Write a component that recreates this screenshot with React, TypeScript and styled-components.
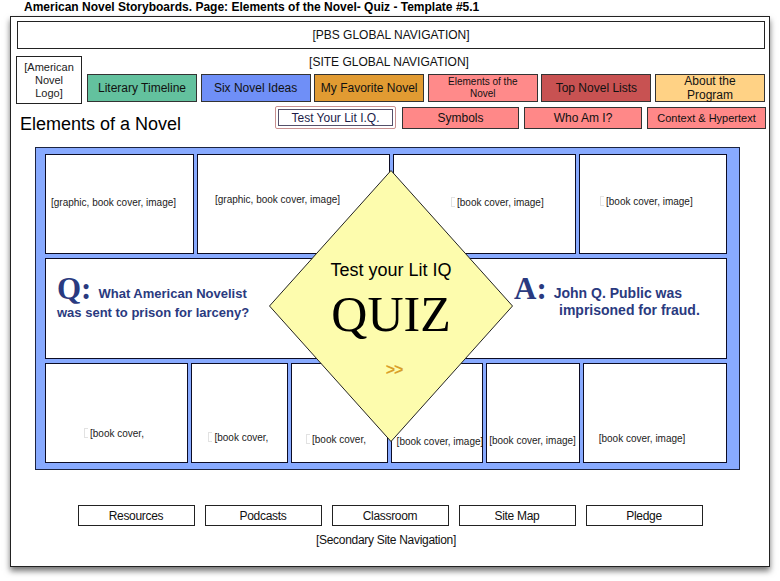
import React from 'react'
import styled, { createGlobalStyle } from 'styled-components'

const GlobalStyle = createGlobalStyle`
    html, body {
        margin: 0;
        padding: 0;
        background: #ffffff;
    }
    body {
        font-family: 'Liberation Sans', Arial, sans-serif;
        color: #111;
    }
    * {
        box-sizing: border-box;
    }
`

const Page = styled.div`
    width: 780px;
    height: 581px;
    overflow: hidden;
`

const DocTitle = styled.div`
    height: 16px;
    padding-left: 24px;
    font-size: 12px;
    font-weight: 700;
    line-height: 14px;
    color: #000;
`

const Frame = styled.div`
    margin-left: 10px;
    width: 760px;
    height: 551px;
    border: 1px solid #222;
    background: #fff;
    box-shadow: 0 4px 6px rgba(0, 0, 0, 0.55);
    display: flex;
    flex-direction: column;
`

const GlobalBar = styled.div`
    margin: 4px 4px 0 6px;
    height: 28px;
    border: 1px solid #222;
    display: flex;
    align-items: center;
    justify-content: center;
    font-size: 12px;
`

const Header = styled.div`
    margin: 7px 4px 0 5px;
    display: grid;
    grid-template-columns: 66px 1fr;
    grid-template-rows: 18px 28px;
    column-gap: 5px;
`

const SiteLabel = styled.div`
    grid-column: 1 / -1;
    grid-row: 1;
    text-align: center;
    font-size: 12px;
    line-height: 12px;
    padding-right: 3px;
`

const Logo = styled.div`
    grid-column: 1;
    grid-row: 1 / 3;
    height: 48px;
    border: 1px solid #222;
    display: flex;
    align-items: center;
    justify-content: center;
    text-align: center;
    font-size: 11px;
    line-height: 13px;
    color: #222;
`

const NavRow = styled.div`
    grid-column: 2;
    grid-row: 2;
    display: flex;
    justify-content: space-between;
`

const NavButton = styled.div<{ $bg: string; $size?: number }>`
    width: 110px;
    height: 28px;
    background: ${(p) => p.$bg};
    border: 1px solid #333;
    display: flex;
    align-items: center;
    justify-content: center;
    text-align: center;
    font-size: ${(p) => p.$size ?? 12}px;
    line-height: ${(p) => (p.$size ?? 12) + 2}px;
    white-space: pre-line;
    color: #111;
`

const SubRow = styled.div`
    margin: 4px 3px 0 9px;
    display: flex;
    align-items: flex-start;
    height: 23px;
`

const PageTitle = styled.div`
    flex: 1;
    font-size: 18px;
    line-height: 22px;
    padding-top: 7px;
    color: #000;
`

const SubNav = styled.div`
    display: flex;
    gap: 5px;
`

const SubButton = styled.div<{ $w: number; $size?: number }>`
    width: ${(p) => p.$w}px;
    height: 22px;
    margin-top: 1px;
    background: #ff8888;
    border: 1px solid #333;
    display: flex;
    align-items: center;
    justify-content: center;
    font-size: ${(p) => p.$size ?? 12}px;
    color: #111;
`

const ActiveButton = styled.div`
    width: 121px;
    height: 23px;
    border: 1px solid #c89090;
    border-radius: 2px;
    padding: 2px;
    margin-right: 1px;
`

const ActiveInner = styled.div`
    height: 100%;
    border: 1px solid #55506a;
    display: flex;
    align-items: center;
    justify-content: center;
    font-size: 12px;
    color: #1c1c48;
`

const Panel = styled.div`
    position: relative;
    margin: 18px 0 0 24px;
    width: 705px;
    background: #88aaff;
    border: 1px solid #1c2440;
    padding: 6px 12px 6px 9px;
    display: flex;
    flex-direction: column;
    gap: 4px;
`

const CellRow = styled.div<{ $h: number; $gap?: number }>`
    display: flex;
    height: ${(p) => p.$h}px;
    gap: ${(p) => p.$gap ?? 3}px;
`

const Cell = styled.div<{ $w: number; $pl: number; $pt: number }>`
    width: ${(p) => p.$w}px;
    height: 100%;
    background: #fff;
    border: 1px solid #0c0c24;
    padding: ${(p) => p.$pt}px 0 0 ${(p) => p.$pl}px;
    font-size: 10px;
    line-height: 12px;
    color: #222;
    white-space: nowrap;
    overflow: hidden;
`

const Broken = styled.span`
    display: inline-block;
    width: 4px;
    height: 10px;
    margin-right: 2px;
    vertical-align: -1px;
    border: 1px solid #e2e2e2;
    border-right: none;
`

const QuizCell = styled.div`
    flex: 1;
    height: 100%;
    background: #fff;
    border: 1px solid #0c0c24;
    display: flex;
    justify-content: space-between;
    align-items: flex-start;
    padding-top: 17px;
    color: #2a3a80;
`

const QBlock = styled.div<{ $w: number; $indent: number; $size: number; $lh: number }>`
    width: ${(p) => p.$w}px;
    padding-left: ${(p) => p.$indent}px;
    font-size: ${(p) => p.$size}px;
    font-weight: 700;
    line-height: ${(p) => p.$lh}px;
    white-space: nowrap;
`

const QLetter = styled.span`
    font-family: 'Liberation Serif', 'Times New Roman', serif;
    font-size: 31px;
    font-weight: 700;
    line-height: 26px;
    margin-right: 7px;
    vertical-align: -1px;
`

const ALine = styled.span`
    display: block;
    padding-left: 45px;
`

const Diamond = styled.div`
    position: absolute;
    left: 233px;
    top: 22px;
    width: 244px;
    height: 272px;
    display: flex;
    flex-direction: column;
    align-items: center;
`

const DiamondShape = styled.svg`
    position: absolute;
    inset: 0;
`

const QuizLabel = styled.div`
    position: relative;
    margin-top: 89px;
    font-size: 18px;
    line-height: 22px;
    color: #000;
`

const QuizWord = styled.div`
    position: relative;
    margin-top: 7px;
    font-family: 'Liberation Serif', 'Times New Roman', serif;
    font-size: 50px;
    line-height: 52px;
    color: #000;
`

const Arrow = styled.div`
    position: relative;
    margin-top: 21px;
    margin-left: 6px;
    font-size: 16px;
    font-weight: 700;
    color: #d9a02a;
    letter-spacing: -1px;
`

const Footer = styled.div`
    margin-top: 35px;
    display: flex;
    justify-content: center;
    gap: 10px;
`

const FooterButton = styled.div`
    width: 117px;
    height: 21px;
    border: 1px solid #222;
    display: flex;
    align-items: center;
    justify-content: center;
    font-size: 12px;
    letter-spacing: -0.3px;
    color: #111;
`

const FooterLabel = styled.div`
    margin-top: 7px;
    text-align: center;
    font-size: 12px;
    letter-spacing: -0.3px;
    padding-right: 8px;
    color: #111;
`

const topCells = [
    { w: 149, pl: 5, pt: 42, text: '[graphic, book cover, image]', broken: false },
    { w: 193, pl: 17, pt: 39, text: '[graphic, book cover, image]', broken: false },
    { w: 183, pl: 57, pt: 42, text: '[book cover, image]', broken: true },
    { w: 148, pl: 20, pt: 41, text: '[book cover, image]', broken: true },
]

const bottomCells = [
    { w: 144, pl: 38, pt: 64, text: '[book cover,', broken: true },
    { w: 97, pl: 16, pt: 68, text: '[book cover,', broken: true },
    { w: 97, pl: 14, pt: 70, text: '[book cover,', broken: true },
    { w: 93, pl: 5, pt: 72, text: '[book cover, image]', broken: false },
    { w: 94, pl: 2, pt: 71, text: '[book cover, image]', broken: false },
    { w: 145, pl: 15, pt: 69, text: '[book cover, image]', broken: false },
]

const navItems = [
    { label: 'Literary Timeline', bg: '#63c19e' },
    { label: 'Six Novel Ideas', bg: '#6f8ff7' },
    { label: 'My Favorite Novel', bg: '#e19b32' },
    { label: 'Elements of the\nNovel', bg: '#ff8a8a', size: 10 },
    { label: 'Top Novel Lists', bg: '#c85252' },
    { label: 'About the\nProgram', bg: '#ffd285' },
]

export default function App() {
    return (
        <Page>
            <GlobalStyle />
            <DocTitle>
                American Novel Storyboards. Page: Elements of the Novel- Quiz - Template #5.1
            </DocTitle>
            <Frame>
                <GlobalBar>[PBS GLOBAL NAVIGATION]</GlobalBar>
                <Header>
                    <SiteLabel>[SITE GLOBAL NAVIGATION]</SiteLabel>
                    <Logo>
                        [American
                        <br />
                        Novel
                        <br />
                        Logo]
                    </Logo>
                    <NavRow>
                        {navItems.map((n) => (
                            <NavButton key={n.label} $bg={n.bg} $size={n.size}>
                                {n.label}
                            </NavButton>
                        ))}
                    </NavRow>
                </Header>
                <SubRow>
                    <PageTitle>Elements of a Novel</PageTitle>
                    <SubNav>
                        <ActiveButton>
                            <ActiveInner>Test Your Lit I.Q.</ActiveInner>
                        </ActiveButton>
                        <SubButton $w={117}>Symbols</SubButton>
                        <SubButton $w={118}>Who Am I?</SubButton>
                        <SubButton $w={119} $size={11}>
                            Context &amp; Hypertext
                        </SubButton>
                    </SubNav>
                </SubRow>
                <Panel>
                    <CellRow $h={100}>
                        {topCells.map((c, i) => (
                            <Cell key={i} $w={c.w} $pl={c.pl} $pt={c.pt}>
                                {c.broken && <Broken />}
                                {c.text}
                            </Cell>
                        ))}
                    </CellRow>
                    <CellRow $h={101}>
                        <QuizCell>
                            <QBlock $w={260} $indent={11} $size={13} $lh={19}>
                                <QLetter>Q:</QLetter>What American Novelist
                                <br />
                                was sent to prison for larceny?
                            </QBlock>
                            <QBlock $w={212} $indent={0} $size={14} $lh={17}>
                                <QLetter>A:</QLetter>John Q. Public was
                                <ALine>imprisoned for fraud.</ALine>
                            </QBlock>
                        </QuizCell>
                    </CellRow>
                    <CellRow $h={100}>
                        {bottomCells.map((c, i) => (
                            <Cell key={i} $w={c.w} $pl={c.pl} $pt={c.pt}>
                                {c.broken && <Broken />}
                                {c.text}
                            </Cell>
                        ))}
                    </CellRow>
                    <Diamond>
                        <DiamondShape viewBox="0 0 244 272" width={244} height={272}>
                            <polygon
                                points="122,0.5 243.5,136 122,271.5 0.5,136"
                                fill="#fdfcad"
                                stroke="#222"
                                strokeWidth={1}
                            />
                        </DiamondShape>
                        <QuizLabel>Test your Lit IQ</QuizLabel>
                        <QuizWord>QUIZ</QuizWord>
                        <Arrow>&gt;&gt;</Arrow>
                    </Diamond>
                </Panel>
                <Footer>
                    <FooterButton>Resources</FooterButton>
                    <FooterButton>Podcasts</FooterButton>
                    <FooterButton>Classroom</FooterButton>
                    <FooterButton>Site Map</FooterButton>
                    <FooterButton>Pledge</FooterButton>
                </Footer>
                <FooterLabel>[Secondary Site Navigation]</FooterLabel>
            </Frame>
        </Page>
    )
}
